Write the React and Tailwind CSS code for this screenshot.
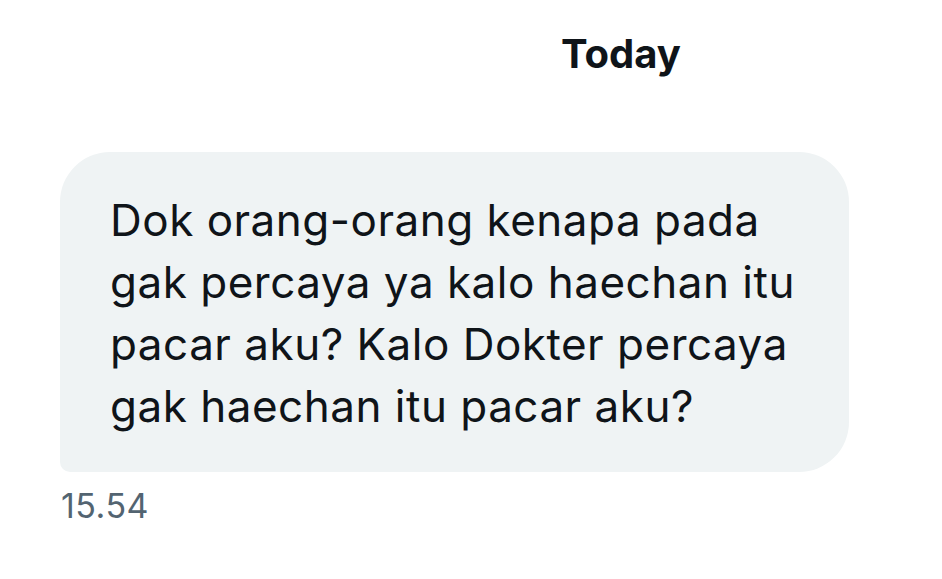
export default function App() {
  return (
    <div className="w-[942px] h-[579px] bg-white overflow-hidden" style={{ fontFamily: 'Inter, "Noto Sans", sans-serif' }}>
      <div className="pt-[29px] pl-[561px] text-[40px] leading-[50px] font-bold text-[#0f1419] tracking-[0px]">Today</div>
      <div className="mt-[73px] ml-[60px] w-[789px] h-[320px] bg-[#eff3f4] rounded-[50px] rounded-bl-[10px] pt-[37px] pl-[50px] text-[44px] leading-[62px] text-[#0f1419] tracking-[0.5px]">
        <div>Dok orang-orang kenapa pada</div>
        <div>gak percaya ya kalo haechan itu</div>
        <div>pacar aku? Kalo Dokter percaya</div>
        <div>gak haechan itu pacar aku?</div>
      </div>
      <div className="mt-[14px] ml-[61px] text-[34px] leading-[40px] text-[#536471] tracking-[0.5px]">15.54</div>
    </div>
  );
}
